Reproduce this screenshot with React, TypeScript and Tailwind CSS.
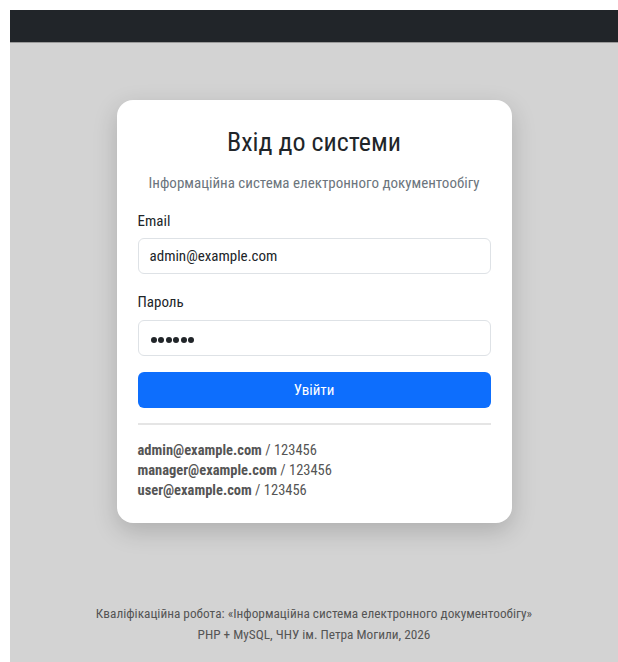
import React from "react";

const creds = [
  { email: "admin@example.com", pass: "123456" },
  { email: "manager@example.com", pass: "123456" },
  { email: "user@example.com", pass: "123456" },
];

export default function App() {
  return (
    <div
      className="min-h-[662px] bg-white pl-[10px] pt-[10px]"
      style={{ fontFamily: '"Roboto Condensed", "Open Sans", sans-serif' }}
    >
      <div className="flex min-h-[652px] flex-col bg-[#d3d3d3]">
        <div className="h-[33px] border-b border-[#9a9a9a] bg-[#212529]" />
        <div className="flex justify-center pt-[57px]">
          <div className="w-[395px] rounded-[16px] bg-white px-[21px] pb-[22px] pt-[26px] shadow-[0_8px_24px_rgba(0,0,0,0.18)]">
            <h1 className="text-center text-[26px] leading-[32px] text-[#212529]">Вхід до системи</h1>
            <p className="mt-[15px] text-center text-[15px] leading-[20px] text-[#6c757d]">
              Інформаційна система електронного документообігу
            </p>
            <label className="mt-[18px] block text-[15px] leading-[20px] text-[#212529]">Email</label>
            <div className="mt-[7px] flex h-[36px] items-center rounded-[6px] border border-[#dee2e6] px-[11px] text-[15px] text-[#212529]">
              admin@example.com
            </div>
            <label className="mt-[18px] block text-[15px] leading-[20px] text-[#212529]">Пароль</label>
            <div className="mt-[8px] flex h-[36px] items-center rounded-[6px] border border-[#dee2e6] px-[12px]">
              <div className="mt-[4px] flex gap-[1.5px]">
                {[0, 1, 2, 3, 4, 5].map((i) => (
                  <span key={i} className="h-[6px] w-[6px] rounded-full bg-[#212529]" />
                ))}
              </div>
            </div>
            <button className="mt-[16px] flex h-[36px] w-full items-center justify-center rounded-[6px] bg-[#0d6efd] text-[15px] text-white">
              Увійти
            </button>
            <div className="mt-[15px] h-[2px] bg-[#e5e5e5]" />
            <div className="mt-[16px] flex flex-col text-[14.5px] leading-[20px] text-[#555]">
              {creds.map((c) => (
                <div key={c.email}>
                  <span className="font-bold">{c.email}</span> / {c.pass}
                </div>
              ))}
            </div>
          </div>
        </div>
        <div className="mt-[80px] text-center text-[13.3px] leading-[21px] text-[#555]">
          <div>Кваліфікаційна робота: «Інформаційна система електронного документообігу»</div>
          <div>PHP + MySQL, ЧНУ ім. Петра Могили, 2026</div>
        </div>
      </div>
    </div>
  );
}
